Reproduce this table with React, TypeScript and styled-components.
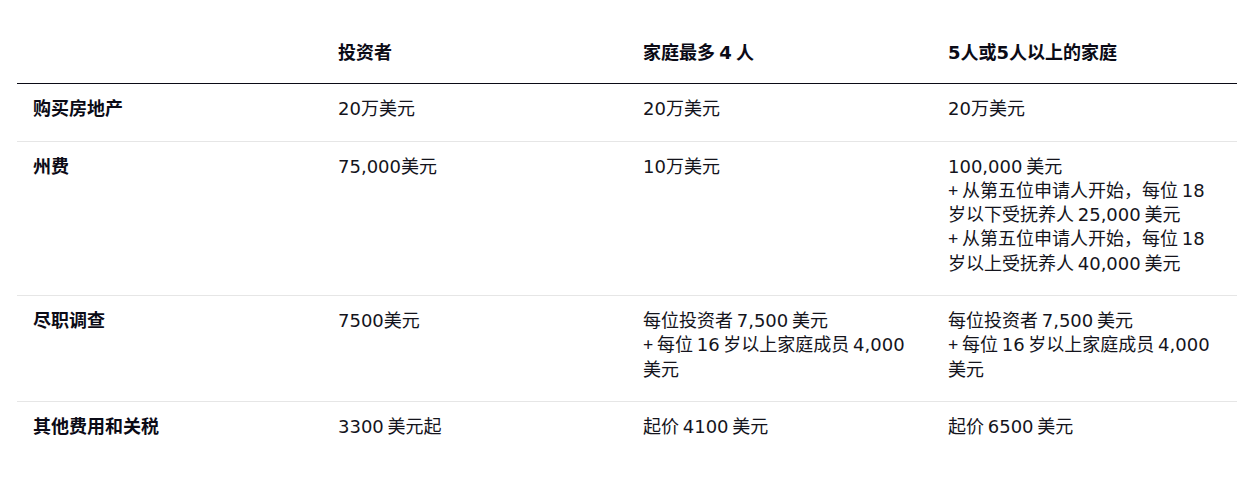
import React from "react";
import styled, { createGlobalStyle } from "styled-components";

const Global = createGlobalStyle`
  html, body { margin: 0; padding: 0; background: #ffffff; }
  body {
    font-family: "DejaVu Sans", "Noto Sans CJK SC", sans-serif;
    color: #111111;
    -webkit-font-smoothing: antialiased;
  }
`;

const Wrap = styled.div`
  padding: 28px 10px 0 17px;
`;

const Table = styled.table`
  width: 1220px;
  border-collapse: collapse;
  table-layout: fixed;
  font-size: 18px;
  line-height: 1.35;
  word-spacing: -2px;
`;

const HeadCell = styled.th`
  text-align: left;
  font-weight: 700;
  color: #0b0b16;
  padding: 13px 16px 18px;
  border-bottom: 1px solid #0b0b16;
  vertical-align: top;
`;

const Row = styled.tr<{ $last?: boolean }>`
  border-bottom: ${(p) => (p.$last ? "none" : "1px solid #e6e6e6")};
`;

const LabelCell = styled.td`
  font-weight: 700;
  color: #0b0b16;
  padding: 13px 16px 19px;
  vertical-align: top;
`;

const Cell = styled.td`
  padding: 13px 16px 19px;
  vertical-align: top;
  color: #14141c;
`;

const Line = styled.div`
  white-space: nowrap;
`;

const Plus = styled.span`
  font-family: "Noto Sans", sans-serif;
  line-height: 1;
`;

type RowData = { label: string; cells: string[][] };

const rows: RowData[] = [
  { label: "购买房地产", cells: [["20万美元"], ["20万美元"], ["20万美元"]] },
  {
    label: "州费",
    cells: [
      ["75,000美元"],
      ["10万美元"],
      [
        "100,000 美元",
        "+ 从第五位申请人开始，每位 18",
        "岁以下受抚养人 25,000 美元",
        "+ 从第五位申请人开始，每位 18",
        "岁以上受抚养人 40,000 美元",
      ],
    ],
  },
  {
    label: "尽职调查",
    cells: [
      ["7500美元"],
      ["每位投资者 7,500 美元", "+ 每位 16 岁以上家庭成员 4,000", "美元"],
      ["每位投资者 7,500 美元", "+ 每位 16 岁以上家庭成员 4,000", "美元"],
    ],
  },
  {
    label: "其他费用和关税",
    cells: [["3300 美元起"], ["起价 4100 美元"], ["起价 6500 美元"]],
  },
];

function renderLine(text: string) {
  if (text.startsWith("+ ")) {
    return (
      <>
        <Plus>+</Plus>
        {text.slice(1)}
      </>
    );
  }
  return text;
}

export default function App() {
  return (
    <>
      <Global />
      <Wrap>
        <Table>
          <thead>
            <tr>
              <HeadCell></HeadCell>
              <HeadCell>投资者</HeadCell>
              <HeadCell>家庭最多 4 人</HeadCell>
              <HeadCell>5人或5人以上的家庭</HeadCell>
            </tr>
          </thead>
          <tbody>
            {rows.map((r, i) => (
              <Row key={r.label} $last={i === rows.length - 1}>
                <LabelCell>{r.label}</LabelCell>
                {r.cells.map((c, j) => (
                  <Cell key={j}>
                    {c.map((l, k) => (
                      <Line key={k}>{renderLine(l)}</Line>
                    ))}
                  </Cell>
                ))}
              </Row>
            ))}
          </tbody>
        </Table>
      </Wrap>
    </>
  );
}
